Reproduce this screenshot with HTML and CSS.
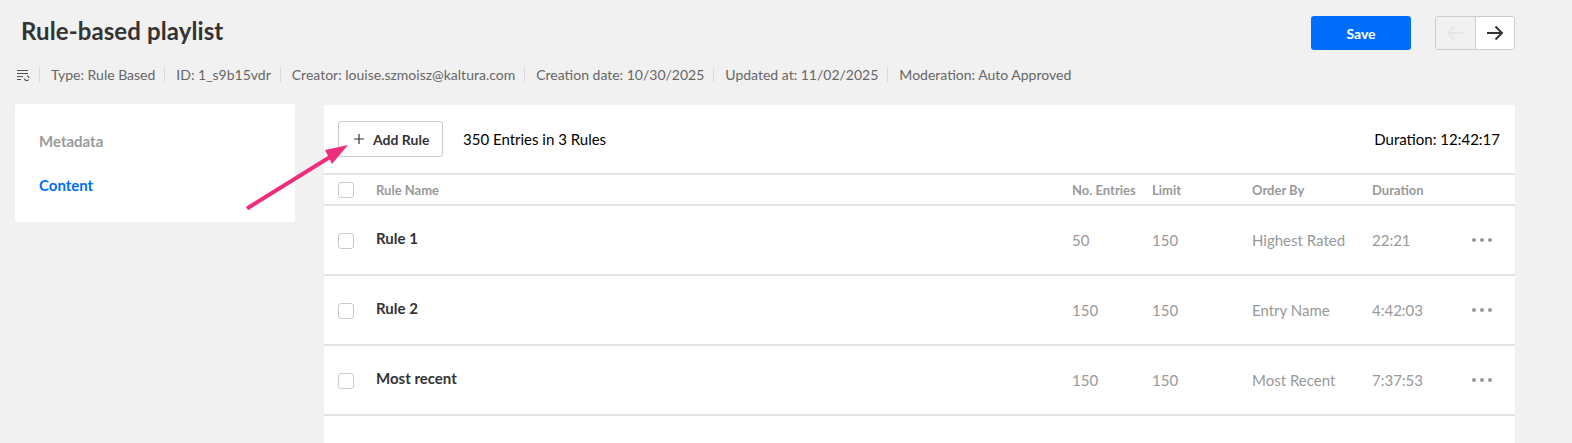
FILE: index.html
```html
<!DOCTYPE html>
<html lang="en">
<head>
    <meta charset="UTF-8">
    <meta name="viewport" content="width=device-width, initial-scale=1.0">
    <title>Rule-based playlist</title>
    <link rel="stylesheet" href="styles.css">
</head>
<body>

<div class="top-bar">
    <h1 class="title">Rule-based playlist</h1>
    <div class="top-actions">
        <button class="save-btn">Save</button>
        <div class="nav-btns">
            <button class="nav-btn nav-btn-off">
                <svg width="18" height="16" viewBox="0 0 18 16" fill="none" stroke="#e6e6e6" stroke-width="2"><path d="M17 8H2M8.500 1.500L2 8l6.500 6.500"/></svg>
            </button>
            <button class="nav-btn">
                <svg width="18" height="16" viewBox="0 0 18 16" fill="none" stroke="#333" stroke-width="2"><path d="M1 8h15M9.500 1.500L16 8l-6.500 6.500"/></svg>
            </button>
        </div>
    </div>
</div>

<div class="meta">
    <svg class="meta-icon" width="13" height="12" viewBox="0 0 13 12" fill="none" stroke="#555" stroke-width="1.200"><path d="M0 1.500h11M0 4.500h11M0 7.500h6M0 10.500h4"/><path d="M7.500 9.500a2.200 2.200 0 0 0 4 1.200M12 9a2.200 2.200 0 0 0-2-2"/></svg>
    <span class="meta-item">Type: Rule Based</span>
    <span class="meta-item">ID: 1_s9b15vdr</span>
    <span class="meta-item">Creator: louise.szmoisz@kaltura.com</span>
    <span class="meta-item">Creation date: 10/30/2025</span>
    <span class="meta-item">Updated at: 11/02/2025</span>
    <span class="meta-item">Moderation: Auto Approved</span>
</div>

<div class="main">
    <div class="sidebar">
        <a class="side-link">Metadata</a>
        <a class="side-link active">Content</a>
    </div>

    <div class="panel">
        <div class="panel-head">
            <button class="add-btn">
                <svg width="10" height="10" viewBox="0 0 10 10" fill="none" stroke="#333" stroke-width="1.200"><path d="M5 0v10M0 5h10"/></svg>
                Add Rule
            </button>
            <span class="summary">350 Entries in 3 Rules</span>
            <span class="total">Duration: 12:42:17</span>
        </div>

        <div class="row row-head">
            <span class="check"></span>
            <span class="col-name">Rule Name</span>
            <span class="col-entries">No. Entries</span>
            <span class="col-limit">Limit</span>
            <span class="col-order">Order By</span>
            <span class="col-dur">Duration</span>
            <span class="col-menu"></span>
        </div>

        <div class="row">
            <span class="check"></span>
            <span class="col-name">Rule 1</span>
            <span class="col-entries">50</span>
            <span class="col-limit">150</span>
            <span class="col-order">Highest Rated</span>
            <span class="col-dur">22:21</span>
            <span class="col-menu"><i></i><i></i><i></i></span>
        </div>
        <div class="row">
            <span class="check"></span>
            <span class="col-name">Rule 2</span>
            <span class="col-entries">150</span>
            <span class="col-limit">150</span>
            <span class="col-order">Entry Name</span>
            <span class="col-dur">4:42:03</span>
            <span class="col-menu"><i></i><i></i><i></i></span>
        </div>
        <div class="row">
            <span class="check"></span>
            <span class="col-name">Most recent</span>
            <span class="col-entries">150</span>
            <span class="col-limit">150</span>
            <span class="col-order">Most Recent</span>
            <span class="col-dur">7:37:53</span>
            <span class="col-menu"><i></i><i></i><i></i></span>
        </div>
    </div>
</div>

<svg class="arrow" width="110" height="80" viewBox="0 0 110 80">
    <path d="M1 69.500L84 18" stroke="#ee2d7d" stroke-width="4" fill="none"/>
    <path d="M102 6L79 11L86 25Z" fill="#ee2d7d"/>
</svg>

</body>
</html>
```

FILE: styles.css
```css
html, body {
    height: 100%;
}
body {
    margin: 0;
    overflow: hidden;
    position: relative;
    font-family: Lato, sans-serif;
    background-color: #f1f1f1;
    color: #333;
}
button {
    font-family: Lato, sans-serif;
    cursor: pointer;
}
.top-bar {
    display: flex;
    justify-content: space-between;
    align-items: flex-start;
    padding: 16px 57px 0 21px;
}
.title {
    margin: 0;
    font-size: 24px;
    line-height: 30px;
    font-weight: 700;
    letter-spacing: 0.1px;
}
.top-actions {
    display: flex;
    gap: 24px;
}
.save-btn {
    width: 100px;
    height: 34px;
    border: none;
    border-radius: 3px;
    background-color: #006efa;
    color: white;
    font-size: 14px;
    font-weight: 700;
}
.nav-btns {
    display: flex;
    width: 80px;
    height: 34px;
    box-sizing: border-box;
    border: 1px solid #ccc;
    border-radius: 3px;
    overflow: hidden;
}
.nav-btn {
    flex: 1;
    padding: 0;
    border: none;
    background: white;
    display: flex;
    align-items: center;
    justify-content: center;
}
.nav-btn-off {
    background: #f1f1f1;
    border-right: 1px solid #ccc;
}
.meta {
    display: flex;
    align-items: center;
    height: 20px;
    margin-top: 15px;
    padding-left: 17px;
    font-size: 14px;
    color: #666;
}
.meta-icon {
    margin-right: 9px;
}
.meta-item {
    padding-left: 11px;
    margin-right: 9px;
    border-left: 1px solid #d9d9d9;
    line-height: 14px;
}
.main {
    display: flex;
    align-items: flex-start;
    gap: 29px;
    margin-top: 20px;
    padding: 0 57px 0 15px;
}
.sidebar {
    width: 280px;
    flex: none;
    height: 118px;
    margin-top: -1px;
    box-sizing: border-box;
    padding: 15px 24px;
    background: white;
    border-radius: 3px;
}
.side-link {
    display: block;
    height: 44px;
    line-height: 44px;
    font-size: 15px;
    font-weight: 700;
    color: #999;
}
.side-link.active {
    color: #006efa;
}
.panel {
    flex: 1;
    background: white;
    height: 340px;
}
.panel-head {
    display: flex;
    align-items: center;
    height: 68px;
    padding: 0 15px 0 14px;
    border-bottom: 2px solid #e3e3e3;
    font-size: 15px;
    color: black;
}
.add-btn {
    display: flex;
    align-items: center;
    gap: 9px;
    width: 105px;
    height: 36px;
    padding: 0 0 0 15px;
    background: white;
    border: 1px solid #ccc;
    border-radius: 3px;
    color: #333;
    font-size: 14px;
    font-weight: 700;
}
.summary {
    margin-left: 20px;
}
.total {
    margin-left: auto;
}
.row {
    display: flex;
    align-items: center;
    height: 68px;
    padding-left: 14px;
    border-bottom: 2px solid #e3e3e3;
    font-size: 15px;
    color: #999;
}
.row-head {
    height: 29px;
    font-size: 13px;
    font-weight: 700;
}
.check {
    flex: none;
    width: 14px;
    height: 14px;
    margin-top: 2px;
    margin-right: 22px;
    border: 1px solid #ccc;
    border-radius: 3px;
}
.row-head .check {
    margin-top: 0;
}
.col-name {
    flex: 1;
    margin-bottom: 4px;
    font-weight: 700;
    color: #333;
}
.row-head .col-name {
    margin-bottom: 0;
    color: #999;
}
.col-entries {
    width: 80px;
}
.col-limit {
    width: 100px;
}
.col-order {
    width: 120px;
}
.col-dur {
    width: 100px;
}
.col-menu {
    width: 43px;
    display: flex;
    gap: 4px;
}
.col-menu i {
    width: 4px;
    height: 4px;
    border-radius: 50%;
    background: #999;
}
.arrow {
    position: absolute;
    left: 246px;
    top: 139px;
}
```
